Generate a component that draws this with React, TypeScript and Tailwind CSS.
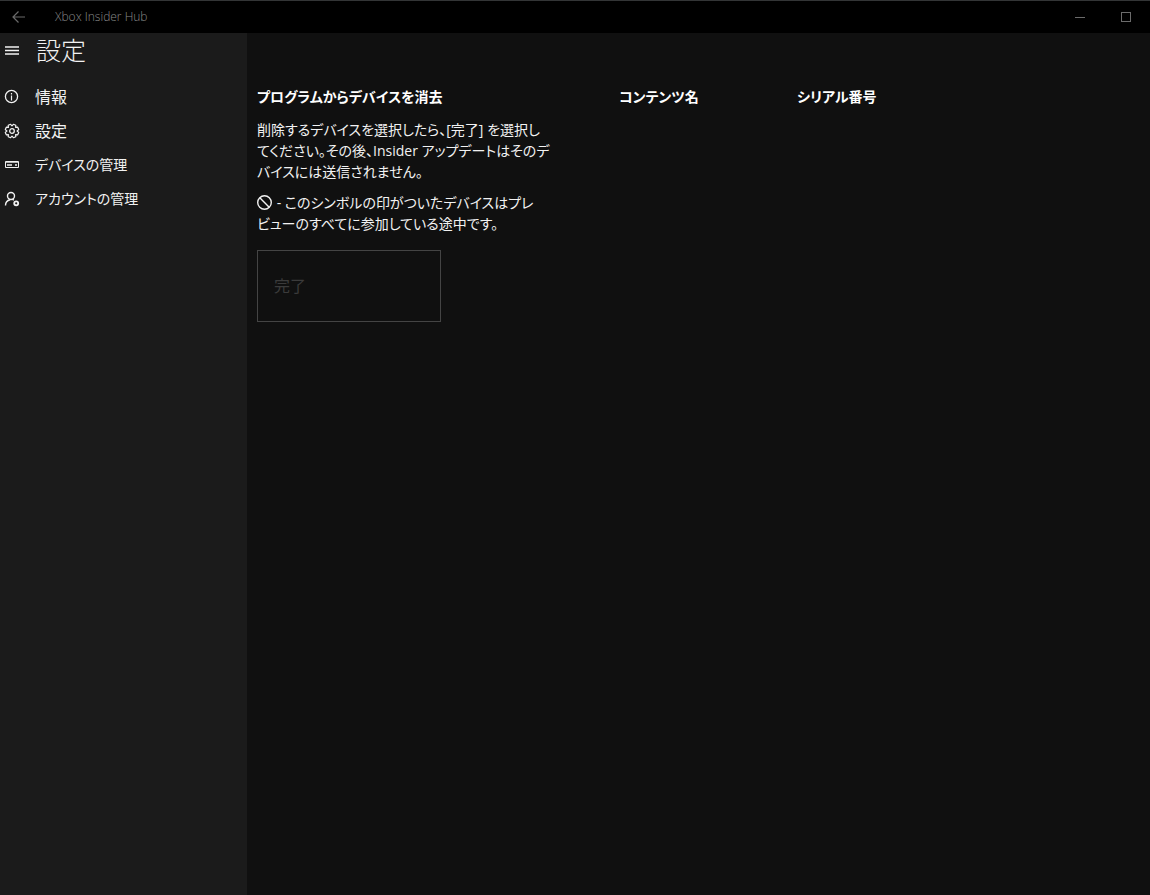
import type { ReactNode } from "react";

const ICON = {
  width: 16,
  height: 16,
  viewBox: "0 0 16 16",
  fill: "none",
  stroke: "currentColor",
  "aria-hidden": true,
} as const;

function BackIcon() {
  return (
    <svg {...ICON}>
      <path d="M15 8H3M8.5 2.5L3 8L8.5 13.5" strokeWidth="1.2" />
    </svg>
  );
}

function MenuIcon() {
  return (
    <svg {...ICON}>
      <path d="M1 5h14M1 8.5h14M1 12h14" strokeWidth="1.3" />
    </svg>
  );
}

function InfoIcon() {
  return (
    <svg {...ICON}>
      <circle cx="7.5" cy="7.5" r="6.1" strokeWidth="1.3" />
      <path d="M7.5 6.5v5M7.5 4v1.4" strokeWidth="1.2" />
    </svg>
  );
}

function GearIcon() {
  return (
    <svg {...ICON}>
      <path
        d="M8 2.9L9.4 1.3L11.8 2.3L11.6 4.4L13.7 4.2L14.7 6.6L13.1 8L14.7 9.4L13.7 11.8L11.6 11.6L11.8 13.7L9.4 14.7L8 13.1L6.6 14.7L4.2 13.7L4.4 11.6L2.3 11.8L1.3 9.4L2.9 8L1.3 6.6L2.3 4.2L4.4 4.4L4.2 2.3L6.6 1.3z"
        strokeWidth="1.2"
        strokeLinejoin="round"
      />
      <circle cx="8" cy="8" r="2.3" strokeWidth="1.3" />
    </svg>
  );
}

function ConsoleIcon() {
  return (
    <svg {...ICON}>
      <path d="M1.5 4.5h13v6h-13z" />
      <path d="M1.5 5.5h13" strokeOpacity="0.7" />
      <path d="M3 8h5M11 8h2" strokeWidth="1.4" />
    </svg>
  );
}

function AccountIcon() {
  return (
    <svg {...ICON}>
      <circle cx="7" cy="5" r="3.5" strokeWidth="1.4" />
      <path d="M1.5 14.5c0-3.2 1.9-5.2 4.6-5.8M8.5 8.4l1.4.8" strokeWidth="1.4" />
      <circle cx="12.2" cy="12.3" r="2" strokeWidth="1.8" />
    </svg>
  );
}

function BlockedIcon() {
  return (
    <svg {...ICON} className="inline-block align-[-3px]">
      <circle cx="7.5" cy="7.5" r="6.8" strokeWidth="1.4" />
      <path d="M2.8 2.8l9.4 9.4" strokeWidth="1.4" />
    </svg>
  );
}

const NAV: { label: string; href: string; icon: ReactNode; size: string }[] = [
  { label: "情報",             href: "#info",     icon: <InfoIcon />,    size: "text-base" },
  { label: "設定",             href: "#settings", icon: <GearIcon />,    size: "text-base" },
  { label: "デバイスの管理",   href: "#devices",  icon: <ConsoleIcon />, size: "text-sm" },
  { label: "アカウントの管理", href: "#accounts", icon: <AccountIcon />, size: "text-sm" },
];

function TitleBar() {
  return (
    <header className="flex h-[33px] shrink-0 items-center border-t border-[#333536] bg-black pr-px text-[#6b6b6b]">
      <button type="button" aria-label="戻る" className="flex h-full w-12 items-center pl-[10px]">
        <BackIcon />
      </button>
      <span className="flex-1 pl-[7px] text-xs font-light text-[#8a8a8a]">Xbox Insider Hub</span>
      <button type="button" aria-label="最小化" className="flex h-full w-[46px] items-center justify-center">
        <svg width="10" height="10" viewBox="0 0 10 10" stroke="currentColor" shapeRendering="crispEdges">
          <path d="M0 5.5h10" />
        </svg>
      </button>
      <button type="button" aria-label="最大化" className="flex h-full w-[46px] items-center justify-center">
        <svg width="10" height="10" viewBox="0 0 10 10" fill="none" stroke="currentColor" shapeRendering="crispEdges">
          <path d="M0.5 0.5h9v9h-9z" />
        </svg>
      </button>
    </header>
  );
}

function Sidebar() {
  return (
    <aside className="w-[247px] shrink-0 bg-[#1b1b1b]">
      <div className="flex h-[34px] items-center">
        <button type="button" aria-label="メニュー" className="flex h-full w-9 items-center pl-1">
          <MenuIcon />
        </button>
        <h1 className="text-[25px] leading-[34px] font-light">設定</h1>
      </div>
      <nav className="mt-[13px]">
        {NAV.map(({ label, href, icon, size }) => (
          <a key={href} href={href} className={`flex h-[34px] items-center pl-1 ${size}`}>
            <span className="w-[31px] shrink-0">{icon}</span>
            {label}
          </a>
        ))}
      </nav>
    </aside>
  );
}

export default function App() {
  return (
    <div
      lang="ja"
      className="flex min-h-screen flex-col bg-[#101010] font-['Open_Sans','Noto_Sans_CJK_JP',sans-serif] text-sm text-[#f2f2f2] [font-feature-settings:'palt']"
    >
      <TitleBar />
      <div className="flex flex-1">
        <Sidebar />
        <main className="flex flex-1 items-start pt-[53px] pl-[10px]">
          <section className="w-[362px] shrink-0">
            <h2 className="leading-[22px] font-bold text-white">プログラムからデバイスを消去</h2>
            <p className="mt-[11px] leading-[21px] whitespace-nowrap">
              削除するデバイスを選択したら、[完了] を選択し
              <br />
              てください。その後、Insider アップデートはそのデ
              <br />
              バイスには送信されません。
            </p>
            <p className="mt-[10px] leading-[21px] whitespace-nowrap">
              <BlockedIcon /> - このシンボルの印がついたデバイスはプレ
              <br />
              ビューのすべてに参加している途中です。
            </p>
            <button
              type="button"
              disabled
              className="mt-4 h-[72px] w-[184px] border border-[#444444] pl-4 text-left text-base text-[#3b3b3b]"
            >
              完了
            </button>
          </section>
          <table className="flex-1 text-left leading-[22px] text-white">
            <thead>
              <tr>
                <th scope="col" className="w-[178px] p-0 font-bold">コンテンツ名</th>
                <th scope="col" className="p-0 font-bold">シリアル番号</th>
              </tr>
            </thead>
          </table>
        </main>
      </div>
    </div>
  );
}
